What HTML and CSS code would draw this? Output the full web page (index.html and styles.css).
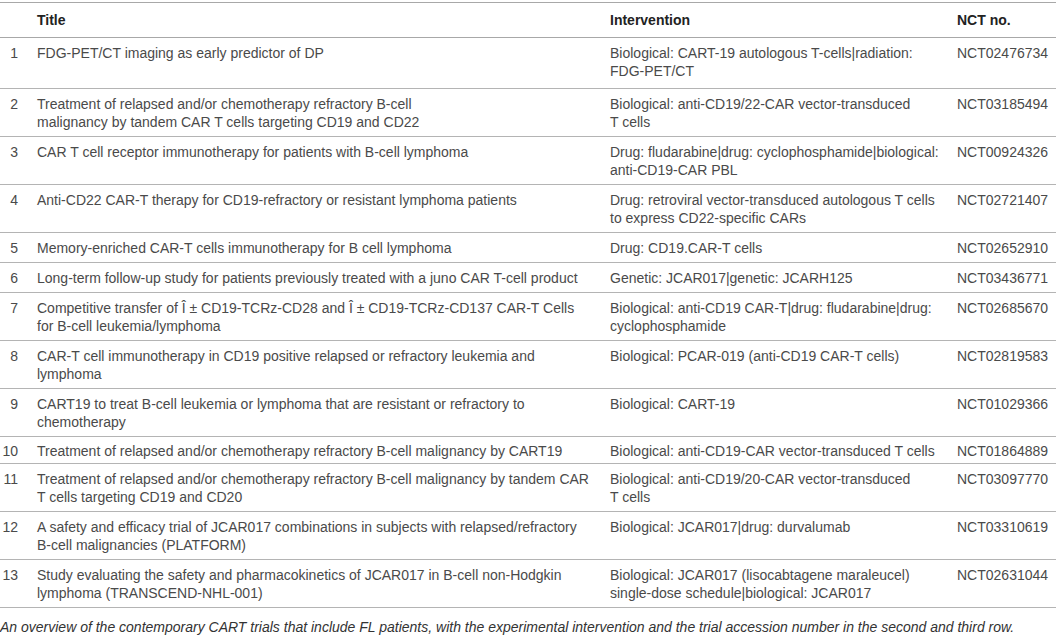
FILE: index.html
```html
<!DOCTYPE html>
<html lang="en">

<head>
    <meta charset="UTF-8">
    <meta name="viewport" content="width=device-width, initial-scale=1.0">
    <title>CART trials including FL patients</title>
    <link rel="stylesheet" href="styles.css">
</head>

<body>
    <div class="table-wrap">
        <table class="trials">
            <colgroup>
                <col class="col-num">
                <col class="col-title">
                <col class="col-int">
                <col class="col-nct">
            </colgroup>
            <thead>
                <tr>
                    <th></th>
                    <th>Title</th>
                    <th>Intervention</th>
                    <th>NCT no.</th>
                </tr>
            </thead>
            <tbody>
                <tr class="first">
                    <td class="num">1</td>
                    <td>FDG-PET/CT imaging as early predictor of DP</td>
                    <td>Biological: CART-19 autologous T-cells|radiation:<br>FDG-PET/CT</td>
                    <td>NCT02476734</td>
                </tr>
                <tr>
                    <td class="num">2</td>
                    <td>Treatment of relapsed and/or chemotherapy refractory B-cell<br>malignancy by tandem CAR T cells targeting CD19 and CD22</td>
                    <td>Biological: anti-CD19/22-CAR vector-transduced<br>T cells</td>
                    <td>NCT03185494</td>
                </tr>
                <tr>
                    <td class="num">3</td>
                    <td>CAR T cell receptor immunotherapy for patients with B-cell lymphoma</td>
                    <td>Drug: fludarabine|drug: cyclophosphamide|biological:<br>anti-CD19-CAR PBL</td>
                    <td>NCT00924326</td>
                </tr>
                <tr>
                    <td class="num">4</td>
                    <td>Anti-CD22 CAR-T therapy for CD19-refractory or resistant lymphoma patients</td>
                    <td>Drug: retroviral vector-transduced autologous T cells<br>to express CD22-specific CARs</td>
                    <td>NCT02721407</td>
                </tr>
                <tr>
                    <td class="num">5</td>
                    <td>Memory-enriched CAR-T cells immunotherapy for B cell lymphoma</td>
                    <td>Drug: CD19.CAR-T cells</td>
                    <td>NCT02652910</td>
                </tr>
                <tr>
                    <td class="num">6</td>
                    <td>Long-term follow-up study for patients previously treated with a juno CAR T-cell product</td>
                    <td>Genetic: JCAR017|genetic: JCARH125</td>
                    <td>NCT03436771</td>
                </tr>
                <tr>
                    <td class="num">7</td>
                    <td>Competitive transfer of Î ± CD19-TCRz-CD28 and Î ± CD19-TCRz-CD137 CAR-T Cells<br>for B-cell leukemia/lymphoma</td>
                    <td>Biological: anti-CD19 CAR-T|drug: fludarabine|drug:<br>cyclophosphamide</td>
                    <td>NCT02685670</td>
                </tr>
                <tr>
                    <td class="num">8</td>
                    <td>CAR-T cell immunotherapy in CD19 positive relapsed or refractory leukemia and<br>lymphoma</td>
                    <td>Biological: PCAR-019 (anti-CD19 CAR-T cells)</td>
                    <td>NCT02819583</td>
                </tr>
                <tr>
                    <td class="num">9</td>
                    <td>CART19 to treat B-cell leukemia or lymphoma that are resistant or refractory to<br>chemotherapy</td>
                    <td>Biological: CART-19</td>
                    <td>NCT01029366</td>
                </tr>
                <tr class="single">
                    <td class="num">10</td>
                    <td>Treatment of relapsed and/or chemotherapy refractory B-cell malignancy by CART19</td>
                    <td>Biological: anti-CD19-CAR vector-transduced T cells</td>
                    <td>NCT01864889</td>
                </tr>
                <tr>
                    <td class="num">11</td>
                    <td>Treatment of relapsed and/or chemotherapy refractory B-cell malignancy by tandem CAR<br>T cells targeting CD19 and CD20</td>
                    <td>Biological: anti-CD19/20-CAR vector-transduced<br>T cells</td>
                    <td>NCT03097770</td>
                </tr>
                <tr>
                    <td class="num">12</td>
                    <td>A safety and efficacy trial of JCAR017 combinations in subjects with relapsed/refractory<br>B-cell malignancies (PLATFORM)</td>
                    <td>Biological: JCAR017|drug: durvalumab</td>
                    <td>NCT03310619</td>
                </tr>
                <tr>
                    <td class="num">13</td>
                    <td>Study evaluating the safety and pharmacokinetics of JCAR017 in B-cell non-Hodgkin<br>lymphoma (TRANSCEND-NHL-001)</td>
                    <td>Biological: JCAR017 (lisocabtagene maraleucel)<br>single-dose schedule|biological: JCAR017</td>
                    <td>NCT02631044</td>
                </tr>
            </tbody>
        </table>
        <p class="caption">An overview of the contemporary CART trials that include FL patients, with the experimental intervention and the trial accession number in the second and third row.</p>
    </div>
</body>

</html>
```

FILE: styles.css
```css
body,
p,
table {
    margin: 0;
    padding: 0;
}

body {
    background-color: #fff;
    font-family: "Liberation Sans", Arial, sans-serif;
    color: #4a4a4a;
}

.table-wrap {
    padding-top: 2px;
}

.trials {
    width: 1056px;
    table-layout: fixed;
    border-collapse: collapse;
    border-top: 1px solid #a8a8a8;
    border-bottom: 1px solid #a8a8a8;
    font-size: 14px;
    line-height: 18px;
}

.trials .col-num {
    width: 27px;
}

.trials .col-title {
    width: 573px;
}

.trials .col-int {
    width: 347px;
}

.trials th {
    padding: 8px 0 8px 10px;
    text-align: left;
    font-weight: bold;
    color: #222;
    border-bottom: 1px solid #a8a8a8;
}

.trials td {
    padding: 6px 0 5px 10px;
    vertical-align: top;
    white-space: nowrap;
    border-bottom: 1px solid #b4b4b4;
}

.trials tr.first td {
    padding-bottom: 8px;
}

.trials tr.single td {
    padding-top: 5px;
    padding-bottom: 3px;
}

.trials td.num {
    padding-left: 0;
    padding-right: 9px;
    text-align: right;
}

.caption {
    margin-top: 11px;
    font-size: 14px;
    line-height: 16px;
    font-style: italic;
    color: #333;
}
```
